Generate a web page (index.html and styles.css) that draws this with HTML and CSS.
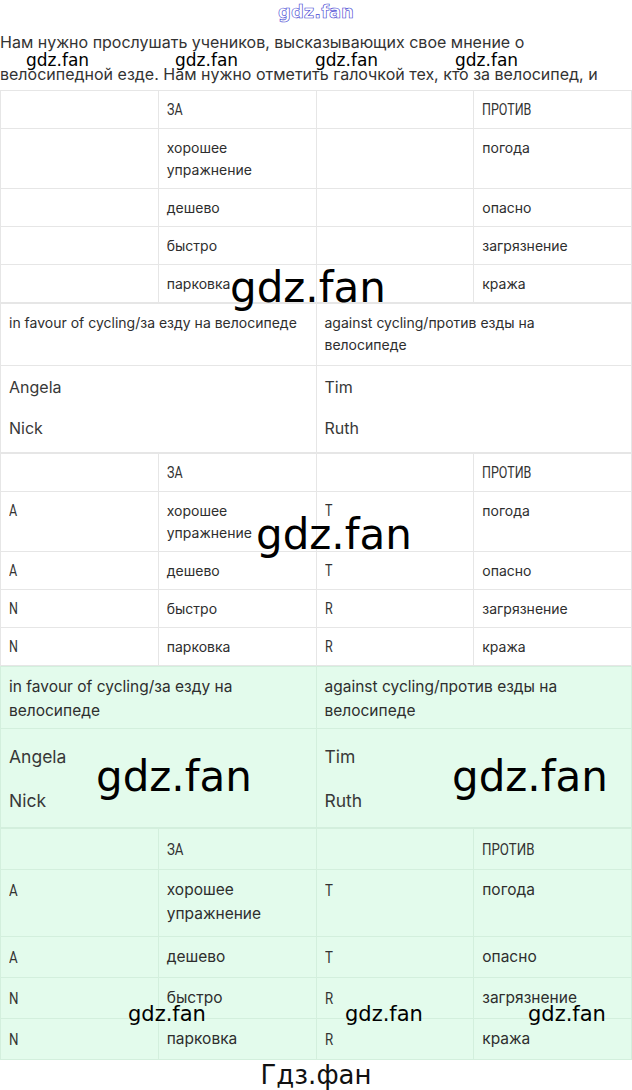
FILE: index.html
```html
<!DOCTYPE html>
<html lang="ru">
<head>
<meta charset="utf-8">
<title>gdz.fan</title>
<link rel="stylesheet" href="styles.css">
</head>
<body>
<div class="page">
  <div class="logo">gdz.fan</div>
  <p class="intro">Нам нужно прослушать учеников, высказывающих свое мнение о<br>велосипедной езде. Нам нужно отметить галочкой тех, кто за велосипед, и</p>

  <table class="grid">
    <tr><td></td><td><span class="cap">ЗА</span></td><td></td><td><span class="cap">ПРОТИВ</span></td></tr>
    <tr class="tall"><td></td><td>хорошее<br>упражнение</td><td></td><td>погода</td></tr>
    <tr><td></td><td>дешево</td><td></td><td>опасно</td></tr>
    <tr><td></td><td>быстро</td><td></td><td>загрязнение</td></tr>
    <tr><td></td><td>парковка</td><td></td><td>кража</td></tr>
  </table>

  <table class="grid">
    <tr><td class="head">in favour of cycling/за езду на велосипеде</td><td class="head">against cycling/против езды на<br>велосипеде</td></tr>
    <tr><td class="names"><p>Angela</p><p>Nick</p></td><td class="names"><p>Tim</p><p>Ruth</p></td></tr>
  </table>

  <table class="grid">
    <tr><td></td><td><span class="cap">ЗА</span></td><td></td><td><span class="cap">ПРОТИВ</span></td></tr>
    <tr class="tall"><td><span class="cap">A</span></td><td>хорошее<br>упражнение</td><td><span class="cap">T</span></td><td>погода</td></tr>
    <tr><td><span class="cap">A</span></td><td>дешево</td><td><span class="cap">T</span></td><td>опасно</td></tr>
    <tr><td><span class="cap">N</span></td><td>быстро</td><td><span class="cap">R</span></td><td>загрязнение</td></tr>
    <tr><td><span class="cap">N</span></td><td>парковка</td><td><span class="cap">R</span></td><td>кража</td></tr>
  </table>

  <div class="answer">
    <table class="grid">
      <tr><td class="head">in favour of cycling/за езду на велосипеде</td><td class="head">against cycling/против езды на велосипеде</td></tr>
      <tr><td class="names"><p>Angela</p><p>Nick</p></td><td class="names"><p>Tim</p><p>Ruth</p></td></tr>
    </table>
    <table class="grid">
      <tr><td></td><td><span class="cap">ЗА</span></td><td></td><td><span class="cap">ПРОТИВ</span></td></tr>
      <tr class="tall"><td><span class="cap">A</span></td><td>хорошее<br>упражнение</td><td><span class="cap">T</span></td><td>погода</td></tr>
      <tr><td><span class="cap">A</span></td><td>дешево</td><td><span class="cap">T</span></td><td>опасно</td></tr>
      <tr><td><span class="cap">N</span></td><td>быстро</td><td><span class="cap">R</span></td><td>загрязнение</td></tr>
      <tr><td><span class="cap">N</span></td><td>парковка</td><td><span class="cap">R</span></td><td>кража</td></tr>
    </table>
  </div>

  <div class="footer">Гдз.фан</div>

  <span class="wm wm-s wm-t1">gdz.fan</span>
  <span class="wm wm-s wm-t2">gdz.fan</span>
  <span class="wm wm-s wm-t3">gdz.fan</span>
  <span class="wm wm-s wm-t4">gdz.fan</span>
  <span class="wm wm-l wm-l1">gdz.fan</span>
  <span class="wm wm-l wm-l2">gdz.fan</span>
  <span class="wm wm-l wm-l3">gdz.fan</span>
  <span class="wm wm-l wm-l4">gdz.fan</span>
  <span class="wm wm-m wm-b1">gdz.fan</span>
  <span class="wm wm-m wm-b2">gdz.fan</span>
  <span class="wm wm-m wm-b3">gdz.fan</span>
</div>
</body>
</html>
```

FILE: styles.css
```css
* { box-sizing: border-box; }
html, body { margin: 0; padding: 0; background: #fff; }
body {
  font-family: Inter, "Noto Sans", "DejaVu Sans", sans-serif;
  color: #2e2e2e;
}
.page { position: relative; width: 632px; }

.logo {
  height: 24px;
  line-height: 24px;
  text-align: center;
  font-family: "DejaVu Sans", sans-serif;
  font-weight: bold;
  font-size: 18px;
  color: #fff;
  -webkit-text-stroke: 0.6px #4242d2;
}

.intro {
  margin: 2px 0 0;
  font-size: 16px;
  line-height: 32px;
  color: #333;
  white-space: nowrap;
}

.grid {
  width: 632px;
  border-collapse: collapse;
  table-layout: fixed;
  font-size: 14px;
  line-height: 22px;
}
.grid td {
  border: 1px solid #e6e6e6;
  padding: 8px 8px 7px;
  vertical-align: top;
}
.grid td.head { padding-bottom: 9px; }

.cap {
  display: inline-block;
  font-family: Roboto, "DejaVu Sans", sans-serif;
  font-size: 16px;
  color: #333;
  transform: scaleX(0.78);
  transform-origin: left center;
}

.grid td.names {
  font-size: 16px;
  line-height: 24px;
  padding: 9px 8px 12px;
  color: #383838;
}
.names p { margin: 0 0 17px; }
.names p:last-child { margin-bottom: 0; }

.answer { background: #e3fbec; }
.answer .grid { font-size: 15.5px; line-height: 24px; }
.answer .grid td { border-color: #d3efdd; padding: 8px 8px 7px; }
.answer .grid td.head { padding-bottom: 5px; }
.answer .grid tr.tall td { padding-bottom: 10px; }
.answer .cap { font-size: 17px; }
.answer .grid td.names {
  font-size: 17.5px;
  line-height: 26px;
  padding: 15px 8px 13px;
}
.answer .names p { margin-bottom: 18px; }
.answer .names p:last-child { margin-bottom: 0; }

.footer {
  height: 34px;
  line-height: 30px;
  text-align: center;
  font-family: "DejaVu Sans", sans-serif;
  font-size: 26px;
  color: #111;
}

.wm {
  position: absolute;
  font-family: "DejaVu Sans", sans-serif;
  line-height: 1;
  color: #000;
  white-space: nowrap;
}
.wm-s { font-size: 17px; top: 52px; }
.wm-m { font-size: 21px; top: 1004px; }
.wm-l { font-size: 42px; }
.wm-t1 { left: 26px; }
.wm-t2 { left: 175px; }
.wm-t3 { left: 315px; }
.wm-t4 { left: 455px; }
.wm-l1 { left: 230px; top: 267px; }
.wm-l2 { left: 256px; top: 514px; }
.wm-l3 { left: 96px; top: 756px; }
.wm-l4 { left: 452px; top: 756px; }
.wm-b1 { left: 128px; }
.wm-b2 { left: 345px; }
.wm-b3 { left: 528px; }
```
